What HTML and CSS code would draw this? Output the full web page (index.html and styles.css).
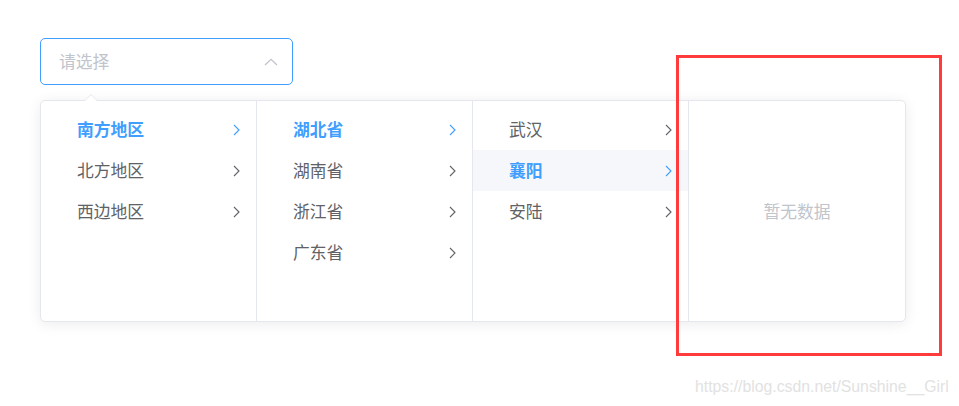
FILE: index.html
```html
<!DOCTYPE html>
<html lang="zh-CN">
<head>
<meta charset="utf-8">
<title>Cascader</title>
<link rel="stylesheet" href="styles.css">
</head>
<body>
<div class="page">
  <div class="cascader-input">
    <span class="placeholder">请选择</span>
    <svg class="chevron" width="14" height="8" viewBox="0 0 14 8"><polyline points="1,7 7,1.3 13,7" fill="none" stroke="#c0c4cc" stroke-width="1.3"/></svg>
  </div>
  <div class="panel">
    <span class="popper-arrow"></span>
    <ul class="menu">
      <li class="node active"><span class="label">南方地区</span><svg class="arrow" viewBox="0 0 7 12"><polyline points="1,1 6,6 1,11"/></svg></li>
      <li class="node"><span class="label">北方地区</span><svg class="arrow" viewBox="0 0 7 12"><polyline points="1,1 6,6 1,11"/></svg></li>
      <li class="node"><span class="label">西边地区</span><svg class="arrow" viewBox="0 0 7 12"><polyline points="1,1 6,6 1,11"/></svg></li>
    </ul>
    <ul class="menu">
      <li class="node active"><span class="label">湖北省</span><svg class="arrow" viewBox="0 0 7 12"><polyline points="1,1 6,6 1,11"/></svg></li>
      <li class="node"><span class="label">湖南省</span><svg class="arrow" viewBox="0 0 7 12"><polyline points="1,1 6,6 1,11"/></svg></li>
      <li class="node"><span class="label">浙江省</span><svg class="arrow" viewBox="0 0 7 12"><polyline points="1,1 6,6 1,11"/></svg></li>
      <li class="node"><span class="label">广东省</span><svg class="arrow" viewBox="0 0 7 12"><polyline points="1,1 6,6 1,11"/></svg></li>
    </ul>
    <ul class="menu">
      <li class="node"><span class="label">武汉</span><svg class="arrow" viewBox="0 0 7 12"><polyline points="1,1 6,6 1,11"/></svg></li>
      <li class="node active hover"><span class="label">襄阳</span><svg class="arrow" viewBox="0 0 7 12"><polyline points="1,1 6,6 1,11"/></svg></li>
      <li class="node"><span class="label">安陆</span><svg class="arrow" viewBox="0 0 7 12"><polyline points="1,1 6,6 1,11"/></svg></li>
    </ul>
    <div class="menu empty">暂无数据</div>
  </div>
  <div class="highlight-box"></div>
  <div class="watermark">https://blog.csdn.net/Sunshine__Girl</div>
</div>
</body>
</html>
```
FILE: styles.css
```css
html, body {
  margin: 0;
  padding: 0;
  background: #ffffff;
}
body {
  font-family: "Noto Sans CJK SC", "Noto Sans", sans-serif;
}
.page {
  position: relative;
  width: 959px;
  height: 406px;
  padding: 38px 0 0 40px;
  box-sizing: border-box;
  overflow: hidden;
}
.cascader-input {
  width: 253px;
  height: 47px;
  box-sizing: border-box;
  border: 1px solid #409eff;
  border-radius: 5px;
  display: flex;
  align-items: center;
  justify-content: space-between;
  padding: 0 14px 0 18px;
}
.placeholder {
  font-size: 16.8px;
  color: #c0c4cc;
  line-height: 1;
}
.chevron {
  display: block;
  width: 14px;
  height: 8px;
}
.panel {
  position: relative;
  margin-top: 15px;
  width: 866px;
  height: 222px;
  box-sizing: border-box;
  border: 1px solid #e4e7ed;
  border-radius: 5px;
  background: #fff;
  box-shadow: 0 2px 14px 0 rgba(0, 0, 0, 0.08);
  display: flex;
}
.popper-arrow {
  position: absolute;
  top: -7px;
  left: 43px;
  width: 0;
  height: 0;
  border-left: 7px solid transparent;
  border-right: 7px solid transparent;
  border-bottom: 7px solid #e4e7ed;
}
.popper-arrow::after {
  content: "";
  position: absolute;
  left: -6px;
  top: 1px;
  border-left: 6px solid transparent;
  border-right: 6px solid transparent;
  border-bottom: 6px solid #fff;
}
.menu {
  list-style: none;
  margin: 0;
  padding: 8px 0 0;
  width: 216px;
  box-sizing: border-box;
  border-right: 1px solid #e4e7ed;
  height: 100%;
}
.menu:last-child {
  border-right: none;
}
.node {
  height: 41px;
  display: flex;
  align-items: center;
  padding: 0 16px 0 36px;
  font-size: 16.8px;
  color: #606266;
}
.node .label {
  flex: 1;
  line-height: 1;
}
.node .arrow {
  width: 7px;
  height: 12px;
  fill: none;
  stroke: #606266;
  stroke-width: 1.1;
}
.node.active {
  color: #409eff;
  font-weight: 700;
}
.node.active .arrow {
  stroke: #409eff;
}
.node.hover {
  background: #f5f7fa;
}
.empty {
  display: flex;
  align-items: center;
  justify-content: center;
  padding: 0;
  font-size: 16.8px;
  color: #c0c4cc;
}
.highlight-box {
  position: absolute;
  left: 676px;
  top: 55px;
  width: 266px;
  height: 301px;
  box-sizing: border-box;
  border: 3px solid #ff3b3b;
}
.watermark {
  position: absolute;
  left: 695px;
  top: 378px;
  font-family: "Liberation Sans", Arial, sans-serif;
  font-size: 15.8px;
  color: #e2e2e2;
  white-space: nowrap;
}
```
